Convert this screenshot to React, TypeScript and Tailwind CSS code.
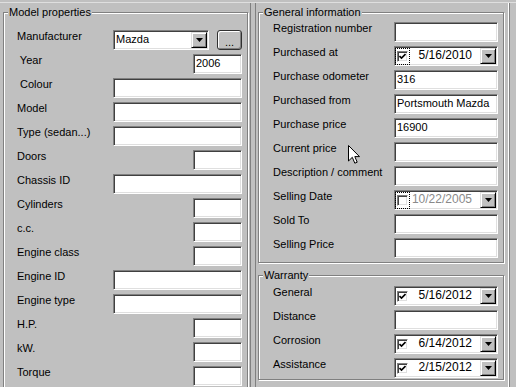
import React from 'react';

const sunken =
  'border border-t-[#808080] border-l-[#808080] border-b-white border-r-white shadow-[inset_1px_1px_0_#404040,inset_-1px_-1px_0_#dfdfdf]';
const raised =
  'border border-t-[#dfdfdf] border-l-[#dfdfdf] border-b-black border-r-black shadow-[inset_1px_1px_0_#fff,inset_-1px_-1px_0_#808080]';

const Arrow = () => (
  <div className={`${raised} w-[16px] h-[16px] bg-[#c0c0c0] flex items-center justify-center mr-[1px] ml-auto shrink-0`}>
    <svg width="7" height="4" viewBox="0 0 7 4">
      <path d="M0 0 H7 L3.5 4 Z" fill="black" />
    </svg>
  </div>
);

const TextBox = ({ w, value = '' }: { w: string; value?: string }) => (
  <div className={`${sunken} ${w} h-[20px] bg-white px-[2px] leading-[16px] whitespace-nowrap overflow-hidden`}>{value}</div>
);

const Check = ({ on }: { on: boolean }) => (
  <div className={`${sunken} w-[11px] h-[11px] bg-white flex items-center justify-center`}>
    {on && (
      <svg width="7" height="7" viewBox="0 0 7 7">
        <path d="M0.5 3 L2.5 5 L6.5 1" stroke="black" strokeWidth="1.6" fill="none" />
      </svg>
    )}
  </div>
);

const DatePicker = ({ date, on = true, focus = false, disabled = false }: { date: string; on?: boolean; focus?: boolean; disabled?: boolean }) => (
  <div className={`${sunken} w-[104px] h-[20px] bg-white flex items-center`}>
    <div className={`w-[15px] h-[17px] flex items-center justify-center border ${focus ? 'border-dotted border-black' : 'border-transparent'}`}>
      <Check on={on} />
    </div>
    <div className={`flex-1 text-right pr-[8px] text-[12px] leading-[14px] -mt-[2px] whitespace-nowrap ${disabled ? 'text-[#8a8a8a]' : ''}`}>{date}</div>
    <Arrow />
  </div>
);

const GroupBox = ({ title, className = '', children }: { title: string; className?: string; children: React.ReactNode }) => (
  <div className={`border border-[#808080] shadow-[inset_1px_1px_0_#fff,1px_1px_0_#fff] ${className}`}>
    <div className="-mt-[7px] ml-[4px] w-fit bg-[#c0c0c0] px-[1px] leading-[13px]">{title}</div>
    {children}
  </div>
);

const Row = ({ label, children }: { label: string; children: React.ReactNode }) => (
  <div className="flex h-[20px] items-start">
    <div className="leading-[13px] whitespace-pre">{label}</div>
    <div className="ml-auto flex">{children}</div>
  </div>
);

const wide = 'w-[129px]';
const narrow = 'w-[49px]';

const modelRows: [string, string, string?][] = [
  [' Year', narrow, '2006'],
  [' Colour', wide],
  ['Model', wide],
  ['Type (sedan...)', wide],
  ['Doors', narrow],
  ['Chassis ID', wide],
  ['Cylinders', narrow],
  ['c.c.', narrow],
  ['Engine class', narrow],
  ['Engine ID', wide],
  ['Engine type', wide],
  ['H.P.', narrow],
  ['kW.', narrow],
  ['Torque', narrow],
];

export default function App() {
  return (
    <div className="relative w-[516px] h-[387px] overflow-hidden bg-[#c0c0c0] text-[11px] text-black font-['Liberation_Sans',Arial,sans-serif] pt-[2px]">
      <div className="flex h-full border-t border-[#dfdfdf]">
        {/* left panel */}
        <div className="w-[251px] border-r border-[#808080]">
          <GroupBox title="Model properties" className="ml-[3px] mt-[9px] w-[245px] h-[400px]">
            <div className="mt-[11px] pl-[13px] pr-[5px] flex flex-col gap-[4px]">
              <Row label="Manufacturer">
                <div className={`${sunken} w-[96px] h-[20px] bg-white flex items-center`}>
                  <div className="flex-1 px-[2px] leading-[13px] -mt-[2px]">Mazda</div>
                  <Arrow />
                </div>
                <div className="ml-[8px] w-[25px] h-[20px] rounded-[3px] border border-[#303030] bg-[#c0c0c0] shadow-[inset_1px_1px_0_#fff,inset_-1px_-1px_0_#808080] flex items-end justify-center leading-[12px] pb-[1px]">
                  ...
                </div>
              </Row>
              {modelRows.map(([l, w, v]) => (
                <Row key={l} label={l}>
                  <TextBox w={w} value={v} />
                </Row>
              ))}
            </div>
          </GroupBox>
        </div>

        {/* right panel */}
        <div className="ml-[4px] w-[254px] border-l border-[#808080] border-r border-r-white shadow-[1px_0_0_#808080]">
          <GroupBox title="General information" className="ml-[2px] mt-[9px] w-[246px]">
            <div className="mt-[3px] pb-[4px] pl-[14px] pr-[5px] flex flex-col gap-[4px]">
              <Row label="Registration number"><TextBox w="w-[104px]" /></Row>
              <Row label="Purchased at"><DatePicker date="5/16/2010" focus /></Row>
              <Row label="Purchase odometer"><TextBox w="w-[104px]" value="316" /></Row>
              <Row label="Purchased from"><TextBox w="w-[104px]" value="Portsmouth Mazda" /></Row>
              <Row label="Purchase price"><TextBox w="w-[104px]" value="16900" /></Row>
              <Row label="Current price"><TextBox w="w-[104px]" /></Row>
              <Row label="Description / comment"><TextBox w="w-[104px]" /></Row>
              <Row label="Selling Date"><DatePicker date="10/22/2005" on={false} focus disabled /></Row>
              <Row label="Sold To"><TextBox w="w-[104px]" /></Row>
              <Row label="Selling Price"><TextBox w="w-[104px]" /></Row>
            </div>
          </GroupBox>
          <GroupBox title="Warranty" className="ml-[2px] mt-[12px] w-[246px]">
            <div className="mt-[4px] pb-[1px] pl-[14px] pr-[5px] flex flex-col gap-[4px]">
              <Row label="General"><DatePicker date="5/16/2012" /></Row>
              <Row label="Distance"><TextBox w="w-[104px]" /></Row>
              <Row label="Corrosion"><DatePicker date="6/14/2012" /></Row>
              <Row label="Assistance"><DatePicker date="2/15/2012" /></Row>
            </div>
          </GroupBox>
        </div>
      </div>

      {/* mouse pointer */}
      <svg className="absolute left-[348px] top-[145px]" width="12" height="19" viewBox="0 0 12 19">
        <path d="M0.5 0.5 L0.5 16 L4.3 12.3 L6.8 18.2 L9.2 17.2 L6.8 11.6 L11.5 11.6 Z" fill="white" stroke="black" strokeWidth="1" />
      </svg>
    </div>
  );
}
